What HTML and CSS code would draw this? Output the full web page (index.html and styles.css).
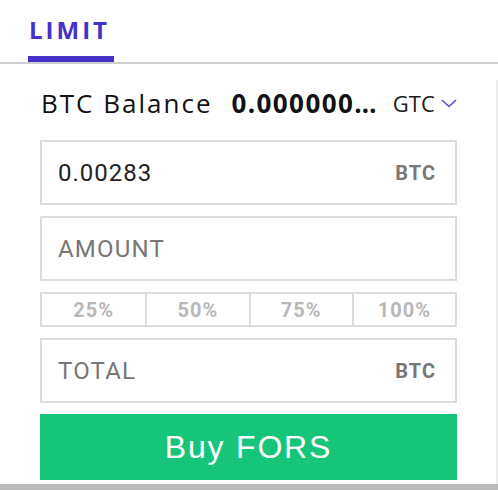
FILE: index.html
```html
<!DOCTYPE html>
<html>
<head>
<meta charset="utf-8">
<link rel="stylesheet" href="styles.css">
</head>
<body>
<div class="tabs">
  <div class="tab active">LIMIT</div>
</div>
<div class="panel">
  <div class="balance">
    <span class="bal-label">BTC Balance</span>
    <span class="bal-value">0.000000…</span>
    <span class="tif">GTC
      <svg class="chev" width="16" height="9" viewBox="0 0 16 9"><path d="M1 1 L8 7.5 L15 1" fill="none" stroke="#5b4ad8" stroke-width="1.6"/></svg>
    </span>
  </div>
  <div class="field"><span class="val">0.00283</span><span class="unit">BTC</span></div>
  <div class="field"><span class="ph">AMOUNT</span></div>
  <div class="pcts">
    <div class="pct">25%</div>
    <div class="pct">50%</div>
    <div class="pct">75%</div>
    <div class="pct">100%</div>
  </div>
  <div class="field"><span class="ph">TOTAL</span><span class="unit">BTC</span></div>
  <button class="buy">Buy FORS</button>
</div>
<div class="bottom-bar"></div>
</body>
</html>
```

FILE: styles.css
```css
* { box-sizing: border-box; }
body {
  margin: 0;
  background: #fff;
  font-family: "Open Sans", "Noto Sans", sans-serif;
  width: 498px;
}
.tabs {
  height: 64px;
  border-bottom: 2px solid #cfcfcf;
  padding-left: 28px;
  display: flex;
  align-items: flex-end;
}
.tab {
  width: 86px;
  height: 62px;
  padding-top: 15px;
  padding-left: 1px;
  font-size: 24px;
  font-weight: 700;
  letter-spacing: 3px;
  color: #4431c9;
  border-bottom: 6px solid #4431c9;
  line-height: 30px;
}
.panel {
  margin-top: 16px;
  border-right: 2px solid #ebebeb;
  padding: 0 39px 4px 40px;
  display: flex;
  flex-direction: column;
  gap: 11px;
}
.balance {
  height: 45px;
  margin-bottom: 4px;
  display: flex;
  align-items: center;
  color: #111;
  white-space: nowrap;
}
.bal-label { font-size: 26px; letter-spacing: 2px; padding-left: 1px; }
.bal-value { font-size: 26px; font-weight: 700; margin-left: 19px; letter-spacing: 1.4px; }
.tif { margin-left: 15px; font-size: 22px; display: flex; align-items: center; color: #1a1a1a; }
.chev { margin-left: 6px; margin-top: 2px; }
.field {
  height: 65px;
  border: 2px solid #dcdcdc;
  display: flex;
  align-items: center;
  justify-content: space-between;
  padding: 0 19px 0 16px;
  font-family: Roboto, "Liberation Sans", sans-serif;
}
.val { font-size: 24px; letter-spacing: 1px; color: #222; }
.ph { font-size: 24px; letter-spacing: 1.2px; color: #777; }
.unit { font-size: 20px; font-weight: 700; letter-spacing: 1px; color: #777; }
.pcts {
  height: 35px;
  display: grid;
  grid-template-columns: repeat(4, 1fr);
  border: 2px solid #dcdcdc;
}
.pct {
  display: flex;
  align-items: center;
  justify-content: center;
  font-family: Roboto, "Liberation Sans", sans-serif;
  font-size: 20px;
  font-weight: 700;
  letter-spacing: 1px;
  color: #b8b8b8;
  border-left: 2px solid #dcdcdc;
}
.pct:first-child { border-left: none; }
.buy {
  height: 66px;
  border: none;
  background: #17c57a;
  color: #fff;
  font-family: "Liberation Sans", Arial, sans-serif;
  font-size: 32px;
  letter-spacing: 1.8px;
  padding: 0;
  margin: 0;
}
.bottom-bar {
  height: 6px;
  background: #bbbbbb;
}
```
